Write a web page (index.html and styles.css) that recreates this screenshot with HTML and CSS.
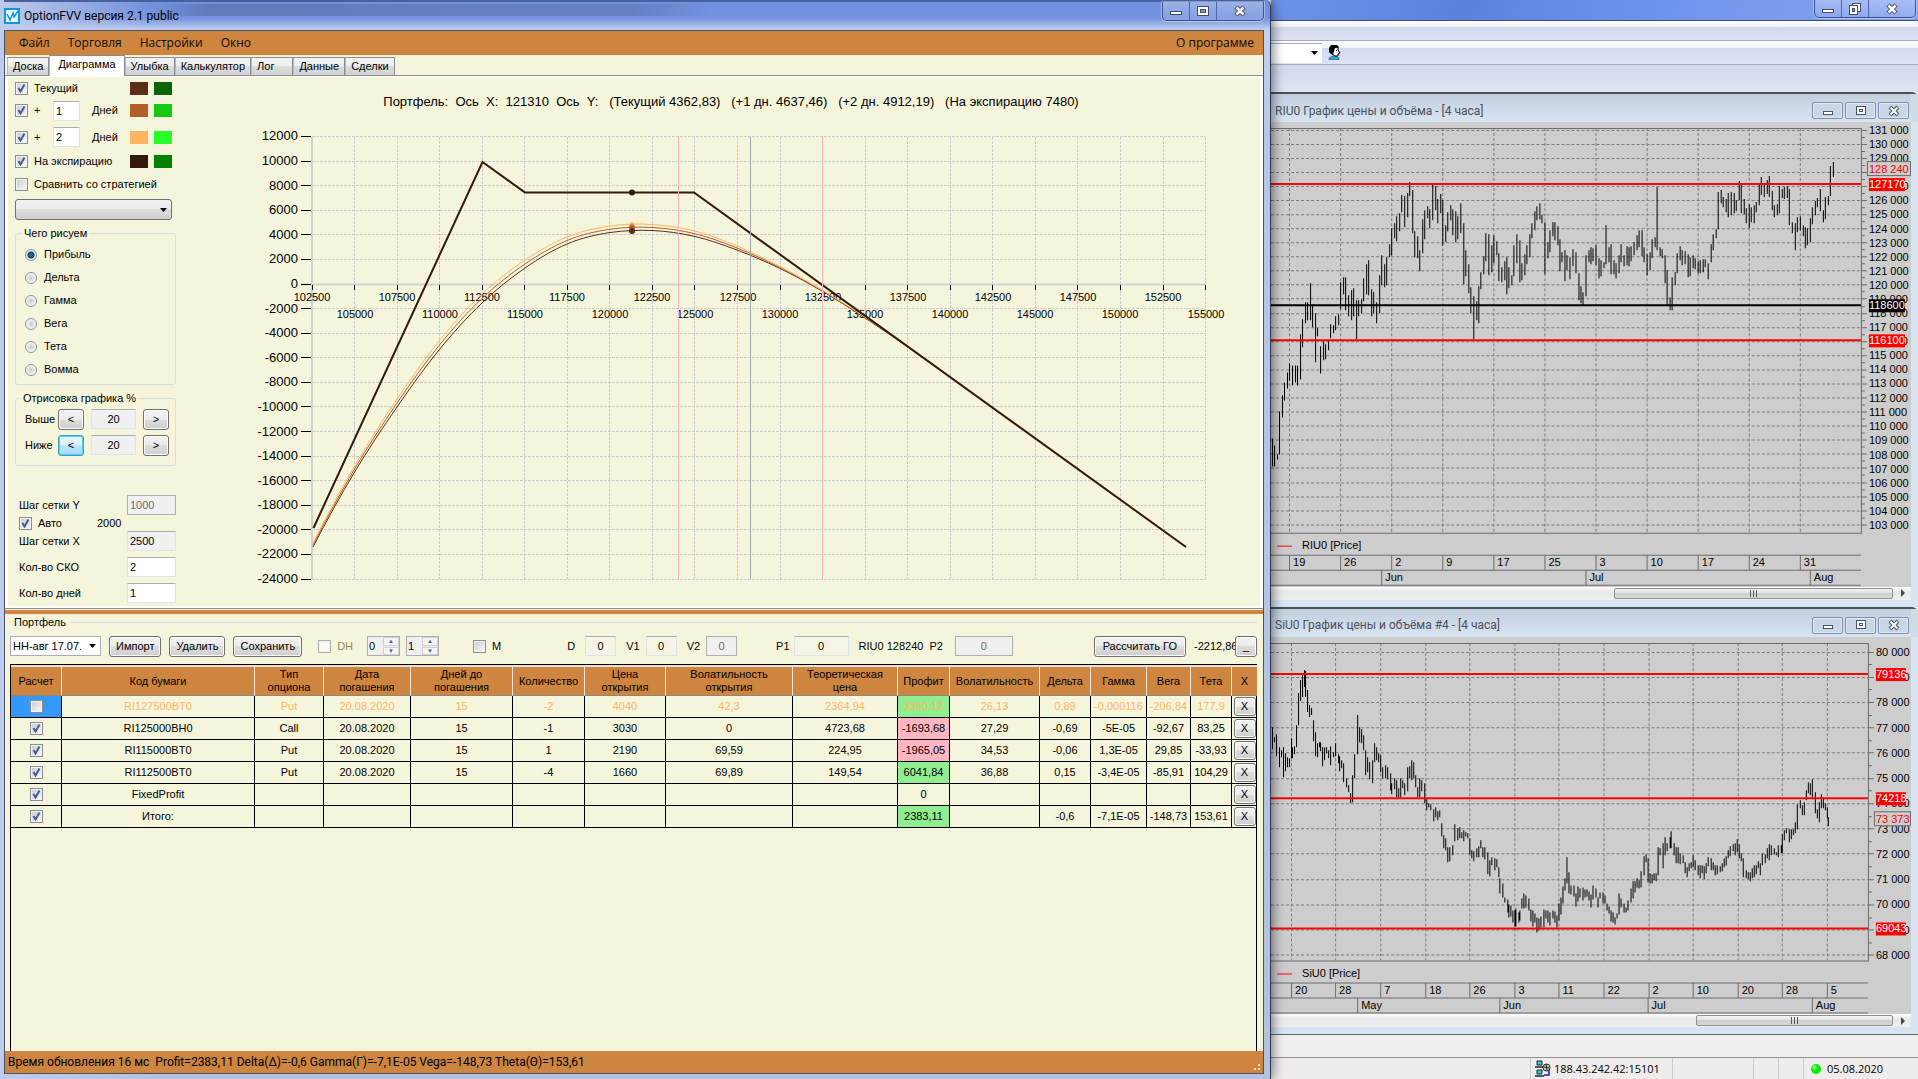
FILE: index.html
```html
<!DOCTYPE html>
<html lang="ru">
<head>
<meta charset="utf-8">
<title>OptionFVV версия 2.1 public</title>
<link rel="stylesheet" href="styles.css">
</head>
<body>
<div class="desktop">
  <section class="app">
    <header class="app-title">
      <svg class="logo" viewBox="0 0 16 16"><rect x="1" y="1" width="14" height="14" fill="#e8f8ff" stroke="#0a9ad8" stroke-width="2"/><path d="M3 6l3 6 3-7 1 4 4-6" fill="none" stroke="#0a9ad8" stroke-width="1.5"/></svg>
      <h1>OptionFVV версия 2.1 public</h1>
      <div class="caption">
        <button aria-label="Свернуть"><svg viewBox="0 0 14 12"><rect x="1.500" y="6.500" width="11" height="3" fill="#fff" stroke="#444c66"/></svg></button>
        <button aria-label="Развернуть"><svg viewBox="0 0 14 12"><rect x="1.500" y="1.500" width="11" height="9" fill="#fff" stroke="#444c66"/><rect x="4.500" y="4.500" width="5" height="3" fill="#7d9be0" stroke="#444c66"/></svg></button>
        <button class="wide" aria-label="Закрыть"><svg viewBox="0 0 14 12"><path d="M3 2l8 8M11 2l-8 8" stroke="#444c66" stroke-width="4.500"/><path d="M3.500 2.500l7 7M10.500 2.500l-7 7" stroke="#fff" stroke-width="2.500"/></svg></button>
      </div>
    </header>
    <div class="client">
      <nav class="menu">
        <a href="#file">Файл</a><a href="#trade">Торговля</a><a href="#settings">Настройки</a><a href="#window">Окно</a>
        <a class="about" href="#about">О программе</a>
      </nav>
      <div class="tabs" role="tablist">
        <button role="tab" class="tab">Доска</button>
        <button role="tab" class="tab active" aria-selected="true">Диаграмма</button>
        <button role="tab" class="tab">Улыбка</button>
        <button role="tab" class="tab">Калькулятор</button>
        <button role="tab" class="tab tab-log">Лог</button>
        <button role="tab" class="tab">Данные</button>
        <button role="tab" class="tab">Сделки</button>
      </div>
      <div class="page">
        <aside class="side">
          <div class="line h22"><label class="grow"><input type="checkbox" checked> Текущий</label><i class="sw c1"></i><i class="sw g1"></i></div>
          <div class="line h23"><label class="plus"><input type="checkbox" checked> +</label><input class="days" type="text" value="1" aria-label="Дней 1"><span class="grow">Дней</span><i class="sw c2"></i><i class="sw g2"></i></div>
          <div class="line h30"><label class="plus"><input type="checkbox" checked> +</label><input class="days" type="text" value="2" aria-label="Дней 2"><span class="grow">Дней</span><i class="sw c3"></i><i class="sw g3"></i></div>
          <div class="line h18"><label class="grow"><input type="checkbox" checked> На экспирацию</label><i class="sw c4"></i><i class="sw g4"></i></div>
          <div class="line h28"><label class="grow"><input type="checkbox"> Сравнить со стратегией</label></div>
          <select class="strategy" aria-label="Стратегия"><option></option></select>
          <fieldset class="what">
            <legend>Чего рисуем</legend>
            <label><input type="radio" name="what" checked> Прибыль</label>
            <label><input type="radio" name="what"> Дельта</label>
            <label><input type="radio" name="what"> Гамма</label>
            <label><input type="radio" name="what"> Вега</label>
            <label><input type="radio" name="what"> Тета</label>
            <label><input type="radio" name="what"> Вомма</label>
          </fieldset>
          <fieldset class="range">
            <legend>Отрисовка графика %</legend>
            <div><label for="above">Выше</label><button class="btn">&lt;</button><input id="above" type="text" value="20" readonly><button class="btn">&gt;</button></div>
            <div><label for="below">Ниже</label><button class="btn focus">&lt;</button><input id="below" type="text" value="20" readonly><button class="btn">&gt;</button></div>
          </fieldset>
          <div class="steps">
            <div><label for="sy">Шаг сетки Y</label><input id="sy" type="text" value="1000" disabled></div>
            <div class="auto"><label><input type="checkbox" checked> Авто</label><span>2000</span></div>
            <div><label for="sx">Шаг сетки X</label><input id="sx" type="text" value="2500" readonly></div>
            <div class="tall"><label for="sko">Кол-во СКО</label><input id="sko" type="text" value="2"></div>
            <div class="tall"><label for="kd">Кол-во дней</label><input id="kd" type="text" value="1"></div>
          </div>
        </aside>
        <svg class="payoff" id="payoff" viewBox="190 77 1070 529"></svg>
      </div>
      <div class="splitter"></div>
      <section class="portfolio">
        <h2>Портфель</h2>
        <div class="tools">
          <select class="pf" aria-label="Портфель"><option>НН-авг 17.07.</option></select>
          <button class="btn">Импорт</button>
          <button class="btn">Удалить</button>
          <button class="btn">Сохранить</button>
          <label class="dh"><input type="checkbox" disabled> DH</label>
          <span class="spin"><input type="text" value="0" aria-label="DH 1"><span><button aria-label="Больше">▲</button><button aria-label="Меньше">▼</button></span></span>
          <span class="spin"><input type="text" value="1" aria-label="DH 2"><span><button aria-label="Больше">▲</button><button aria-label="Меньше">▼</button></span></span>
          <label class="m"><input type="checkbox"> M</label>
          <label class="val d">D <input type="text" value="0" readonly></label>
          <label class="val">V1 <input type="text" value="0" readonly></label>
          <label class="val">V2 <input type="text" value="0" disabled></label>
          <label class="val p">P1 <input type="text" value="0" readonly></label>
          <span>RIU0 128240</span>
          <label class="val p2">P2 <input type="text" value="0" disabled></label>
          <button class="btn go">Рассчитать ГО</button>
          <output class="margin">-2212,86</output>
          <button class="btn mini" aria-label="Свернуть панель">_</button>
        </div>
        <div class="grid">
          <table>
            <colgroup><col class="w51"><col class="w193"><col class="w69"><col class="w87"><col class="w102"><col class="w72"><col class="w81"><col class="w127"><col class="w105"><col class="w52"><col class="w90"><col class="w51"><col class="w56"><col class="w44"><col class="w41"><col class="w25"></colgroup>
            <thead><tr><th>Расчет</th><th>Код бумаги</th><th>Тип опциона</th><th>Дата погашения</th><th>Дней до погашения</th><th>Количество</th><th>Цена открытия</th><th>Волатильность открытия</th><th>Теоретическая цена</th><th>Профит</th><th>Волатильность</th><th>Дельта</th><th>Гамма</th><th>Вега</th><th>Тета</th><th>X</th></tr></thead>
            <tbody>
              <tr class="off"><td class="sel"><input type="checkbox" aria-label="RI127500BT0"></td><td>RI127500BT0</td><td>Put</td><td>20.08.2020</td><td>15</td><td>-2</td><td>4040</td><td>42,3</td><td>2364,94</td><td class="up">3350,12</td><td>26,13</td><td>0,89</td><td>-0,000116</td><td>-206,84</td><td>177,9</td><td><button class="btn">X</button></td></tr>
              <tr><td><input type="checkbox" checked aria-label="RI125000BH0"></td><td>RI125000BH0</td><td>Call</td><td>20.08.2020</td><td>15</td><td>-1</td><td>3030</td><td>0</td><td>4723,68</td><td class="down">-1693,68</td><td>27,29</td><td>-0,69</td><td>-5E-05</td><td>-92,67</td><td>83,25</td><td><button class="btn">X</button></td></tr>
              <tr><td><input type="checkbox" checked aria-label="RI115000BT0"></td><td>RI115000BT0</td><td>Put</td><td>20.08.2020</td><td>15</td><td>1</td><td>2190</td><td>69,59</td><td>224,95</td><td class="down">-1965,05</td><td>34,53</td><td>-0,06</td><td>1,3E-05</td><td>29,85</td><td>-33,93</td><td><button class="btn">X</button></td></tr>
              <tr><td><input type="checkbox" checked aria-label="RI112500BT0"></td><td>RI112500BT0</td><td>Put</td><td>20.08.2020</td><td>15</td><td>-4</td><td>1660</td><td>69,89</td><td>149,54</td><td class="up">6041,84</td><td>36,88</td><td>0,15</td><td>-3,4E-05</td><td>-85,91</td><td>104,29</td><td><button class="btn">X</button></td></tr>
              <tr><td><input type="checkbox" checked aria-label="FixedProfit"></td><td>FixedProfit</td><td></td><td></td><td></td><td></td><td></td><td></td><td></td><td>0</td><td></td><td></td><td></td><td></td><td></td><td><button class="btn">X</button></td></tr>
              <tr><td><input type="checkbox" checked aria-label="Итого"></td><td>Итого:</td><td></td><td></td><td></td><td></td><td></td><td></td><td></td><td class="up">2383,11</td><td></td><td>-0,6</td><td>-7,1E-05</td><td>-148,73</td><td>153,61</td><td><button class="btn">X</button></td></tr>
            </tbody>
          </table>
        </div>
      </section>
      <footer class="status">Время обновления 16 мс&nbsp; Profit=2383,11 Delta(Δ)=-0,6 Gamma(Γ)=-7,1E-05 Vega=-148,73 Theta(Θ)=153,61<i class="grip"></i></footer>
    </div>
  </section>

  <section class="terminal">
    <div class="term-title">
      <div class="caption">
        <button aria-label="Свернуть"><svg viewBox="0 0 14 12"><rect x="1.500" y="6.500" width="11" height="3" fill="#fff" stroke="#444c66"/></svg></button>
        <button aria-label="Восстановить"><svg viewBox="0 0 14 12"><rect x="4.500" y=".500" width="8" height="8" fill="#fff" stroke="#444c66"/><rect x="1.500" y="2.500" width="8" height="9" fill="#fff" stroke="#444c66"/><rect x="4.500" y="5.500" width="2" height="3" fill="#7d9be0" stroke="#444c66"/></svg></button>
        <button class="wide" aria-label="Закрыть"><svg viewBox="0 0 14 12"><path d="M3 2l8 8M11 2l-8 8" stroke="#444c66" stroke-width="4.500"/><path d="M3.500 2.500l7 7M10.500 2.500l-7 7" stroke="#fff" stroke-width="2.500"/></svg></button>
      </div>
    </div>
    <div class="strip menu-strip"></div>
    <div class="strip tool-strip">
      <select class="tool-select" aria-label="Вкладка"><option></option></select>
      <svg class="person" viewBox="0 0 13 15"><path d="M1 15v-2l3-2h4l3 2v2z" fill="#2fa5c8" stroke="#10506a" stroke-width=".5"/><path d="M4 2h6v3l2 3-2 1v2H7l-3-2z" fill="#fff" stroke="#000"/><path d="M1 3l2-3h6l2 2-1 1H7L6 6 5 10 3 9 1 7z" fill="#000"/><path d="M8 5h1v1H8z" fill="#000"/></svg>
    </div>
    <div class="strip empty-strip"></div>

    <article class="mdi">
      <header><h2>RIU0 График цены и объёма - [4 часа]</h2>
        <button aria-label="Свернуть"><svg viewBox="0 0 14 12"><rect x="2.500" y="6.500" width="9" height="3" fill="#fff" stroke="#4a5468"/></svg></button>
        <button aria-label="Развернуть"><svg viewBox="0 0 14 12"><rect x="2.500" y="1.500" width="9" height="8" fill="#fff" stroke="#4a5468"/><rect x="5.500" y="4.500" width="3" height="2" fill="#fff" stroke="#4a5468"/></svg></button>
        <button aria-label="Закрыть"><svg viewBox="0 0 14 12"><path d="M3 2l8 8M11 2l-8 8" stroke="#4a5468" stroke-width="4"/><path d="M3.500 2.500l7 7M10.500 2.500l-7 7" stroke="#fff" stroke-width="2"/></svg></button>
      </header>
      <svg class="quotes" id="riu" viewBox="1272 122 639 464"></svg>
      <div class="scroll"><i class="thumb long"></i><i class="arrow"></i></div>
    </article>
    <article class="mdi">
      <header><h2>SiU0 График цены и объёма #4 - [4 часа]</h2>
        <button aria-label="Свернуть"><svg viewBox="0 0 14 12"><rect x="2.500" y="6.500" width="9" height="3" fill="#fff" stroke="#4a5468"/></svg></button>
        <button aria-label="Развернуть"><svg viewBox="0 0 14 12"><rect x="2.500" y="1.500" width="9" height="8" fill="#fff" stroke="#4a5468"/><rect x="5.500" y="4.500" width="3" height="2" fill="#fff" stroke="#4a5468"/></svg></button>
        <button aria-label="Закрыть"><svg viewBox="0 0 14 12"><path d="M3 2l8 8M11 2l-8 8" stroke="#4a5468" stroke-width="4"/><path d="M3.500 2.500l7 7M10.500 2.500l-7 7" stroke="#fff" stroke-width="2"/></svg></button>
      </header>
      <svg class="quotes" id="siu" viewBox="1272 637 639 377"></svg>
      <div class="scroll"><i class="thumb"></i><i class="arrow"></i></div>
    </article>
    <div class="gap"></div>
    <footer class="term-status">
      <span class="conn"><svg viewBox="0 0 16 17"><path d="M2 1h5v4H2zM2 10h5v4H2z" fill="#20d0e0" stroke="#222"/><path d="M0 7h9M0 16h9" stroke="#555" stroke-width="2"/><path d="M9 15h5V9" fill="none" stroke="#1020c0" stroke-width="1.500"/><circle cx="11.500" cy="7.500" r="3.500" fill="#ccc" stroke="#222"/><path d="M9 7l5 1M11 4l1 6" stroke="#222"/></svg>188.43.242.42:15101</span>
      <span class="s1"></span><span class="s2"></span><span class="s3"></span>
      <span class="date"><i></i>05.08.2020</span>
    </footer>
  </section>
</div>
<script src="charts.js"></script>
</body>
</html>
```
FILE: styles.css
```css
* { box-sizing: border-box; }
body { margin: 0; font: 11px/13px "Liberation Sans", Arial, sans-serif; color: #000; }
button, input, select { font: inherit; color: inherit; margin: 0; padding: 0; border-radius: 0; }
h1, h2 { margin: 0; font-weight: normal; }
svg { display: block; }
.desktop { display: grid; grid-template-columns: 1271fr 647fr; min-height: 100vh; background: #f0f0f0; overflow: hidden; }

/* OptionFVV window */
.app {
  display: flex; flex-direction: column; min-width: 0; position: relative; z-index: 1;
  padding: 0 6px 5px 4px; border-right: 1px solid #2c3850; border-radius: 0 6px 0 0;
  background: linear-gradient(90deg, rgba(190,203,236,1) 0, rgba(190,203,236,0) 12%), linear-gradient(#6f90dc 0, #7493de 18px, #c3d2f0 30px, #b7c6e2 140px, #b4c3dd 100%);
  box-shadow: 2px 0 12px rgba(0,0,0,.5);
}
.app-title {
  display: flex; align-items: center; height: 30px; gap: 4px; border-top: 2px solid #46619c;
  background: linear-gradient(90deg, transparent 12%, rgba(70,90,140,.4) 16%, rgba(70,90,140,.3) 50%, transparent 56%) 0 2px / 100% 12px no-repeat;
}
.logo { width: 16px; height: 16px; }
.app-title h1 { font: 12px/16px Roboto, "Noto Sans", sans-serif; flex: 1; }
.caption { display: flex; align-self: flex-start; height: 19px; border: 1px solid #3e538c; border-top: 0; border-radius: 0 0 5px 5px; overflow: hidden; box-shadow: 0 0 0 1px rgba(255,255,255,.35); }
.caption button { display: grid; place-items: center; width: 27px; border: 0; border-right: 1px solid #5068a8; background: linear-gradient(rgba(255,255,255,.3), rgba(255,255,255,.1)); }
.caption button.wide { width: 46px; border-right: 0; }
.caption svg { width: 14px; height: 12px; }
.client { flex: 1; display: flex; flex-direction: column; border: 1px solid #48506a; background: #f5f5dc; min-width: 0; }
.menu { display: flex; align-items: center; height: 24px; padding: 0 9px 0 14px; gap: 18px; background: #cd853f; font: 12px/16px "Open Sans", "Noto Sans", sans-serif; }
.menu a { color: #100a04; text-decoration: none; }
.menu .about { margin-left: auto; }
.tabs { display: flex; align-items: flex-end; height: 21px; padding-left: 2px; border-bottom: 1px solid #8c8e94; }
.tab { height: 18px; padding: 0 5px; border: 1px solid #898c95; border-left-color: #b8b8b8; border-bottom: 0; background: linear-gradient(#f4f4f4, #ededed 50%, #dcdcdc 50%, #d2d2d2); }
.tab.active { height: 21px; padding: 0 8px 3px; margin-bottom: -1px; background: #fff; }
.tab-log { padding-right: 18px; }
.page { display: flex; height: 532px; border: solid #fff; border-width: 1px 3px 2px 3px; box-shadow: 0 1px 0 #8c8e94; background: #f5f5dc; }
.side { width: 182px; flex: none; padding: 0 14px 0 7px; }
.payoff { flex: 1; min-width: 0; height: 100%; }

input[type=checkbox] { appearance: none; width: 13px; height: 13px; flex: none; border: 1px solid #8c8e94; background: linear-gradient(135deg, #c9cbd0, #fafafa); box-shadow: inset 0 0 0 1px #f2f2f2; }
input[type=checkbox]:checked { background: url("data:image/svg+xml,%3Csvg xmlns='http://www.w3.org/2000/svg' viewBox='0 0 11 11'%3E%3Cpath d='M2.500 5l2 3.500 4-7' fill='none' stroke='%23435a9c' stroke-width='2'/%3E%3C/svg%3E") center / 11px, linear-gradient(135deg, #c9cbd0, #fafafa); }
input[type=radio] { appearance: none; width: 12px; height: 12px; flex: none; border: 1px solid #8c8e94; border-radius: 50%; background: radial-gradient(circle, #c8c8c8 0, #eee 55%, #fff 70%); }
input[type=radio]:checked { background: radial-gradient(circle, #1c86b8 0, #123c5c 3px, #e8eef0 4px); }
input[type=text] { min-width: 0; border: 1px solid #e2e3ea; border-top-color: #abadb3; background: #fff; }
input[readonly], input:disabled { background: #f0f0f0; }
input:disabled { color: #6d6d6d; border-color: #afafaf; }
.btn { border: 1px solid #707070; border-radius: 3px; box-shadow: inset 0 0 0 1px #fcfcfc; background: linear-gradient(#f2f2f2, #ebebeb 50%, #dddddd 50%, #cfcfcf); }
.btn.focus { border-color: #3c9fc8; box-shadow: inset 0 0 0 1px #48d1f5; background: linear-gradient(#eaf6fd, #d9f0fc 50%, #bee6fd 50%, #a7d9f5); }

.line { display: flex; align-items: center; gap: 6px; padding-right: 4px; }
.line label { display: flex; align-items: center; gap: 6px; }
.h18 { height: 18px; } .h22 { height: 22px; } .h23 { height: 23px; } .h28 { height: 28px; } .h30 { height: 30px; }
.grow { flex: 1; }
.plus { width: 32px; }
.days { width: 27px; height: 20px; padding-left: 2px; margin-right: 6px; }
.sw { width: 18px; height: 13px; }
.c1 { background: #5c2c16; } .g1 { background: #0a640a; }
.c2 { background: #b45f28; } .g2 { background: #14c814; }
.c3 { background: #ffb464; } .g3 { background: #28ff28; }
.c4 { background: #321908; } .g4 { background: #008200; }
select { appearance: none; border: 1px solid #abadb3; background: #fff url("data:image/svg+xml,%3Csvg xmlns='http://www.w3.org/2000/svg' viewBox='0 0 7 4'%3E%3Cpath d='M0 0h7L3.500 4z'/%3E%3C/svg%3E") right 4px center / 7px 4px no-repeat; }
.strategy { display: block; width: 157px; height: 21px; margin-top: 1px; border-color: #707070; border-radius: 3px; background: url("data:image/svg+xml,%3Csvg xmlns='http://www.w3.org/2000/svg' viewBox='0 0 7 4'%3E%3Cpath d='M0 0h7L3.500 4z'/%3E%3C/svg%3E") right 4px center / 7px 4px no-repeat, linear-gradient(#f2f2f2, #ebebeb 50%, #dddddd 50%, #cfcfcf); }
fieldset { margin: 0; border: 1px solid #d5dfe5; border-radius: 3px; padding: 0 6px 0 9px; }
legend { padding: 0 2px; margin-left: -3px; }
.what { height: 158px; margin-top: 7px; }
.what label { display: flex; align-items: center; gap: 7px; height: 23px; }
.what legend + label { margin-top: 3px; }
.range { height: 74px; margin-top: 7px; }
.range legend { margin-left: -4px; }
.range div { display: flex; align-items: center; height: 26px; }
.range legend + div { margin-top: 1px; }
.range label { width: 33px; }
.range .btn { width: 26px; height: 21px; }
.range input { width: 45px; height: 20px; margin: 0 7px; text-align: center; }
.steps { margin-top: 29px; padding-left: 4px; }
.steps div { display: flex; align-items: center; justify-content: space-between; height: 20px; }
.steps input[type=text] { width: 49px; height: 20px; padding-left: 2px; }
.steps .auto { height: 16px; justify-content: flex-start; gap: 35px; }
.steps .auto label { display: flex; align-items: center; gap: 6px; }
.steps .tall { height: 20px; margin-top: 6px; }

.splitter { height: 4px; margin-top: 2px; background: #cd853f; flex: none; }
.portfolio { flex: 1; display: flex; flex-direction: column; padding: 0 6px 0 5px; }
.portfolio h2 { display: flex; align-items: center; gap: 3px; font-size: 11px; line-height: 13px; height: 17px; }
.portfolio h2::before, .portfolio h2::after { content: ""; height: 1px; width: 1px; background: #d5dfe5; }
.portfolio h2::after { flex: 1; }
.tools { display: flex; align-items: center; height: 30px; margin-bottom: 3px; gap: 8px; white-space: nowrap; }
.tools .btn { height: 21px; padding: 0 6px; }
.pf { width: 91px; height: 20px; padding-left: 2px; }
.tools label { display: flex; align-items: center; gap: 6px; }
.dh { margin-left: 8px; color: #8c8c58; }
.dh + .spin { margin-left: 6px; }
.dh input { background: #fafaf0; }
.spin { display: flex; width: 33px; height: 20px; border: 1px solid #abadb3; background: #f0f0f0; }
.spin + .spin { margin-left: -2px; }
.spin > input[type=text] { width: 15px; border: 0; padding-left: 1px; background: none; }
.spin > span { display: flex; flex-direction: column; width: 16px; gap: 1px; }
.spin button { flex: 1; border: 1px solid #d0d0d0; background: #f4f4f4; font-size: 6px; line-height: 6px; color: #4a5fa0; }
.m { margin-left: 26px; }
.val input { width: 31px; height: 20px; text-align: center; }
.val input[readonly] { background: #f5f5e6; }
.tools .d { margin-left: 58px; gap: 10px; }
.tools .val { margin-right: 2px; }
.tools .p { margin-left: 29px; gap: 4px; }
.p input { width: 55px; }
.tools .p2 { gap: 12px; margin-left: -2px; }
.p2 input { width: 58px; }
.tools .go { margin-left: auto; padding: 0 8px; }
.margin { width: 41px; overflow: hidden; }
.tools .mini { width: 22px; padding: 0; margin-left: -8px; }

.grid { flex: 1; border: 1px solid #000; border-bottom: 0; }
table { width: 100%; table-layout: fixed; border-collapse: separate; border-spacing: 0; text-align: center; }
.w25 { width: 25px; } .w41 { width: 41px; } .w44 { width: 44px; } .w51 { width: 51px; } .w52 { width: 52px; } .w56 { width: 56px; } .w69 { width: 69px; } .w72 { width: 72px; } .w81 { width: 81px; } .w87 { width: 87px; } .w90 { width: 90px; } .w102 { width: 102px; } .w105 { width: 105px; } .w127 { width: 127px; } .w193 { width: 193px; }
th { height: 31px; padding: 0 2px; font-weight: normal; background: #cd853f; border: solid; border-width: 2px 1px 1px 0; border-color: #e8e0d8 #f5e8d8 #908880 #000; }
td { height: 22px; padding: 0; border: solid #000; border-width: 0 1px 1px 0; white-space: nowrap; overflow: hidden; }
th:last-child, td:last-child { border-right: 0; }
td input { vertical-align: middle; }
td .btn { display: block; width: 22px; height: 19px; margin: auto; }
.off { color: #ffb464; }
.off .btn { color: #000; }
.sel { background: #3399ff; }
.up { background: #90ee90; }
.down { background: #ffb6c1; }
.status { position: relative; display: flex; align-items: center; height: 22px; padding-left: 3px; background: #cd853f; font: 12px/16px Roboto, "Noto Sans", sans-serif; }
.grip { position: absolute; right: 1px; bottom: 1px; width: 12px; height: 12px; background: radial-gradient(circle at 1px 1px, #f5e0c0 1px, transparent 1px) 0 0 / 4px 4px; clip-path: polygon(100% 0, 100% 100%, 0 100%); }

/* Trading terminal behind */
.terminal { display: flex; flex-direction: column; min-width: 0; }
.term-title { display: flex; justify-content: flex-end; height: 21px; padding-right: 2px; background: linear-gradient(100deg, #6c93e8, #5b83dd 30%, #6f94ee 60%, #86a4ee); border-bottom: 1px solid #3c4c70; }
.term-title .caption { height: 18px; }
.strip { border-bottom: 1px solid #a8acb8; background: linear-gradient(#fff 0, #eef0f8 30%, #d2d9ec 32%, #dfe4f4); }
.menu-strip { height: 20px; }
.tool-strip { display: flex; align-items: center; height: 24px; gap: 6px; }
.tool-select { width: 51px; height: 20px; border-width: 1px 0 0; }
.person { width: 13px; height: 15px; }
.empty-strip { height: 27px; background: linear-gradient(#d2d9ec, #dfe4f6); border-bottom: 0; }
.mdi { display: flex; flex-direction: column; padding: 0 7px 7px 0; background: #d7e4f2; border-top: 2px solid #4c5450; border-radius: 0 6px 0 0; }
.mdi header { display: flex; align-items: center; gap: 2px; height: 28px; padding: 5px 2px 0 4px; background: linear-gradient(#c3cfdd, #d7e4f2); box-shadow: 7px 0 0 #d0dbe9; }
.mdi h2 { flex: 1; font: 12px/16px Roboto, "Noto Sans", sans-serif; color: #4c5058; }
.mdi header button { display: grid; place-items: center; width: 31px; height: 17px; border: 1px solid #7f8fab; border-radius: 2px; background: #c9d6e6; box-shadow: inset 0 0 0 1px #dfe9f4; }
.mdi header svg { width: 14px; height: 12px; }
.quotes { width: 100%; background: #cdcdcd; }
.scroll { display: flex; justify-content: flex-end; align-items: center; height: 13px; gap: 8px; padding-right: 6px; background: linear-gradient(#fdfdfd, #e8e8e8 40%, #efefef); }
.thumb { width: 31%; height: 11px; border: 1px solid #8e8e8e; border-radius: 2px; background: repeating-linear-gradient(90deg, #555 0 1px, transparent 1px 3px) center / 8px 7px no-repeat, linear-gradient(#f2f2f2, #e2e2e2 50%, #cfcfcf 50%, #d8d8d8); }
.thumb.long { width: 44%; }
.arrow { border: 4px solid transparent; border-left-color: #444; border-right: 0; }
.gap { flex: 1; border-top: 1px solid #606468; border-bottom: 1px solid #909090; background: #f0f0f0; }
.term-status { display: flex; justify-content: flex-end; height: 21px; background: #f0eceb; font: 11px/21px "Open Sans", "Noto Sans", sans-serif; }
.term-status span { border-left: 1px solid #cfcbc8; }
.conn { display: flex; align-items: center; gap: 3px; width: 142px; padding-left: 4px; }
.conn svg { width: 16px; height: 17px; }
.s1 { width: 81px; } .s2 { width: 25px; } .s3 { width: 25px; }
.date { display: flex; align-items: center; gap: 6px; width: 115px; padding-left: 7px; }
.date i { width: 10px; height: 10px; border-radius: 50%; background: radial-gradient(circle at 35% 35%, #b0ffb0, #00f000 35%); }

/* chart parts */
.mesh { stroke: #cccccc; stroke-dasharray: 3 1; }
.zero { stroke: #d0d0d0; stroke-width: 2; }
.tick { stroke: #000; }
.ylab { font-size: 13px; text-anchor: end; }
.xlab { font-size: 11px; text-anchor: middle; }
.head { font-size: 13px; text-anchor: middle; white-space: pre; }
.curve { fill: none; stroke-width: 1; }
.expiry { fill: none; stroke: #321908; stroke-width: 2; }
.sigma { stroke: #ffb6c1; }
.spot { stroke: #a0a8a8; stroke-width: 1; }
.dash { stroke: #7c7c7c; stroke-dasharray: 3 2; }
.frame { stroke: #6c6c6c; fill: none; }
.bars { stroke: #000; fill: none; }
.price { font-size: 11px; }
.dates { font-size: 11px; }
.level { stroke-width: 2; }
.badge-text { fill: #fff; }
.last { fill: #f00; }
.last-box { fill: #cdcdcd; stroke: #6c6c6c; }
```
FILE: charts.js
```javascript
const NS = 'http://www.w3.org/2000/svg';
function add(parent, tag, attrs, text) {
  const el = document.createElementNS(NS, tag);
  for (const k in attrs) el.setAttribute(k, attrs[k]);
  if (text !== undefined) el.textContent = text;
  parent.appendChild(el);
  return el;
}
const path = (svg, cls, d, extra) => add(svg, 'path', Object.assign({ class: cls, d }, extra));
const snap = v => Math.round(v) + 0.5;

// Payoff diagram
(function () {
  const svg = document.getElementById('payoff');
  const X = p => 312 + (p - 102500) / 2500 * 42.55;
  const Y = v => 284 - v / 2000 * 24.59;
  let mesh = '', ticks = '';
  for (let v = 12000; v >= -24000; v -= 2000) {
    const y = snap(Y(v) - 0.5);
    mesh += `M312 ${y}H1205`;
    ticks += `M301 ${y}h10`;
  }
  for (let p = 102500; p <= 155000; p += 2500) mesh += `M${snap(X(p) - 0.5)} 137V579`;
  path(svg, 'mesh', mesh);
  path(svg, 'zero', 'M301 284.5H1206M312 137V579');
  for (let p = 102500; p <= 155000; p += 2500) ticks += `M${snap(X(p) - 0.5)} 285v5`;
  path(svg, 'tick', ticks);
  for (let v = 12000; v >= -24000; v -= 2000) add(svg, 'text', { class: 'ylab', x: 298, y: Math.round(Y(v)) + 4 }, v);
  for (let p = 102500, i = 0; p <= 155000; p += 2500, i++) add(svg, 'text', { class: 'xlab', x: Math.round(X(p)), y: i % 2 ? 318 : 301 }, p);
  add(svg, 'text', { class: 'head', x: 731, y: 106 }, 'Портфель:  Ось  X:  121310  Ось  Y:   (Текущий 4362,83)   (+1 дн. 4637,46)   (+2 дн. 4912,19)   (На экспирацию 7480)');

  const xs = [313, 354, 397, 439, 482, 525, 567, 610, 633, 652, 695, 737, 779, 822, 865, 908, 950];
  const now = [547, 473, 407, 350, 303, 268, 244, 232.500, 230.500, 230.500, 236.500, 250, 268, 291, 318, 347, 377];
  const far = [543, 467, 399, 341, 294, 260, 237, 226, 224, 224.500, 231, 246, 266, 290, 317, 346.500, 377];
  const mid = now.map((v, i) => (v + far[i]) / 2);
  function smooth(ys) {
    const n = xs.length, h = [], s = [];
    for (let i = 0; i < n - 1; i++) { h[i] = xs[i + 1] - xs[i]; s[i] = (ys[i + 1] - ys[i]) / h[i]; }
    const m = xs.map((x, i) => i === 0 ? s[0] * 1.5 - s[1] * 0.5 : i === n - 1 ? s[n - 2] : (s[i - 1] * h[i] + s[i] * h[i - 1]) / (h[i - 1] + h[i]));
    let d = `M${xs[0]} ${ys[0]}`;
    for (let i = 0; i < n - 1; i++) d += `C${xs[i] + h[i] / 3} ${ys[i] + m[i] * h[i] / 3} ${xs[i + 1] - h[i] / 3} ${ys[i + 1] - m[i + 1] * h[i] / 3} ${xs[i + 1]} ${ys[i + 1]}`;
    return d;
  }
  path(svg, 'curve', smooth(now), { stroke: '#5c2c16' });
  path(svg, 'curve', smooth(mid), { stroke: '#b45f28' });
  path(svg, 'curve', smooth(far), { stroke: '#ffb464' });
  path(svg, 'expiry', 'M313.5 528L482.5 162L525 192.5H694L1186 547');
  path(svg, 'sigma', 'M678.5 137V579M822.5 137V579');
  path(svg, 'spot', 'M750.5 137V579');
  [[192.5, '#321908', 3], [224, '#ffb464', 2], [227.5, '#b45f28', 3], [231, '#5c2c16', 3]]
    .forEach(([cy, fill, r]) => add(svg, 'circle', { cx: 632, cy, r, fill }));
})();

// Four-hour bars: x, high, low on the recording sheet
const RIU = '8,1314,1397 13,1335,1397 20,1362,1376 26,1233,1363 32,1185,1250 38,1146,1200 45,1115,1164 50,1088,1140 57,1095,1155 64,1095,1147 69,1095,1155 76,1002,1137 81,958,1040 88,906,969 94,905,960 100,849,960 105,912,982 112,938,1085 118,985,1008 124,1038,1118 131,1023,1080 137,1032,1078 144,1022,1050 149,972,1013 156,975,998 161,948,990 168,942,975 173,846,927 180,831,882 185,831,930 192,885,948 199,870,960 205,864,948 212,900,1017 217,900,948 223,896,938 229,834,903 236,792,882 241,780,885 248,867,948 254,875,938 260,905,970 267,825,938 273,765,855 279,793,860 285,770,855 291,732,772 297,684,765 303,670,713 309,648,723 316,640,693 321,585,636 328,588,682 334,580,650 340,546,588 347,570,700 352,693,771 359,708,775 364,750,812 371,657,758 376,630,717 383,617,655 389,627,683 396,552,660 402,558,630 408,597,670 415,582,638 420,600,735 427,675,725 433,636,693 439,615,660 445,628,705 451,633,725 457,648,718 463,608,700 470,668,852 476,750,828 483,793,878 488,860,938 495,888,1017 501,903,960 506,858,970 512,815,868 519,768,822 525,699,783 531,702,825 538,735,817 544,705,788 550,722,765 556,760,843 562,800,846 569,783,840 574,770,881 580,800,864 587,825,855 592,735,828 599,702,790 606,720,845 612,788,840 618,762,825 624,735,792 630,702,770 636,668,713 642,633,690 648,618,660 654,609,657 660,645,670 666,666,822 673,725,773 679,690,755 685,666,708 691,666,720 697,678,735 703,717,813 709,755,787 715,750,843 721,765,810 728,770,838 735,747,797 741,755,820 748,818,900 754,858,909 759,875,914 766,765,888 772,750,787 779,741,793 784,745,782 790,735,795 797,775,833 803,780,828 809,787,805 815,675,792 821,740,787 827,733,822 833,780,822 839,788,833 845,765,820 851,732,785 857,765,798 864,738,795 870,742,797 876,738,783 882,725,765 889,705,750 894,690,742 901,690,768 907,740,787 914,762,825 920,755,810 926,717,775 933,711,742 938,561,750 945,740,768 951,747,775 957,765,850 963,810,915 969,890,930 975,831,930 981,815,855 987,758,820 993,738,780 999,750,795 1006,753,792 1012,762,830 1018,770,828 1024,765,805 1030,775,808 1037,783,820 1042,780,818 1049,778,815 1055,778,800 1061,790,837 1068,732,785 1073,702,750 1080,687,713 1085,576,688 1092,570,610 1098,592,622 1104,597,635 1110,580,650 1117,575,645 1123,580,638 1129,600,633 1136,543,600 1142,555,638 1148,597,642 1154,625,670 1160,612,684 1166,620,665 1172,615,670 1178,605,635 1184,555,615 1190,531,586 1197,552,590 1203,540,583 1209,528,592 1215,572,630 1221,615,650 1227,612,645 1233,558,638 1240,567,595 1246,562,596 1252,558,595 1258,567,675 1264,665,700 1271,670,750 1277,650,695 1283,648,690 1290,675,708 1296,682,743 1301,683,735 1307,655,725 1314,620,673 1320,603,645 1326,595,622 1332,567,632 1339,630,665 1345,590,657 1351,588,615 1356,498,588 1363,486,530';
const SIU = '8,381,446 13,410,426 18,402,467 25,441,500 31,450,470 35,441,530 40,460,513 45,470,500 50,475,500 54,414,475 57,440,475 61,438,461 66,375,440 72,279,375 77,240,303 81,222,290 87,210,261 89,212,290 93,270,335 98,315,350 103,325,345 108,360,423 113,396,468 118,430,472 121,425,440 125,425,452 130,440,497 135,440,480 139,440,460 144,450,475 150,438,494 155,455,472 161,429,467 167,461,490 171,468,512 176,480,505 181,490,545 187,533,560 193,555,575 198,580,609 202,525,605 208,461,533 214,345,461 219,381,425 223,387,430 229,405,450 234,450,525 239,472,515 244,485,538 250,480,548 255,429,487 260,440,480 265,460,485 270,465,515 275,502,535 281,495,533 287,502,538 293,520,570 297,550,582 303,535,568 308,540,590 313,563,592 318,535,590 324,540,563 329,550,585 334,500,572 339,498,535 345,480,540 350,485,533 355,525,562 360,560,590 364,535,590 370,540,572 376,550,610 381,595,630 386,610,620 392,612,630 397,628,662 402,622,650 408,632,660 413,630,650 418,670,708 423,705,745 428,715,750 433,740,785 438,742,782 444,735,765 449,672,723 455,685,720 460,682,715 465,697,715 470,690,722 476,697,708 481,700,715 485,715,762 490,750,775 496,752,782 501,745,770 507,738,770 512,720,745 517,740,770 522,742,777 528,755,822 533,780,828 539,770,795 545,775,810 550,778,800 555,800,830 559,835,880 564,850,890 571,890,905 576,898,935 580,912,950 585,915,948 590,930,965 593,930,978 597,925,978 603,935,965 607,930,960 611,893,925 616,878,925 621,885,920 627,895,930 632,928,963 638,930,978 643,940,965 648,950,995 653,955,990 658,948,982 664,928,980 669,930,955 674,930,965 680,935,975 686,930,955 691,933,965 696,945,980 700,910,960 706,890,943 711,857,908 716,835,870 720,772,850 725,815,880 730,855,882 736,855,888 741,880,917 747,858,902 752,865,890 758,860,900 763,866,890 768,868,888 773,872,900 778,882,920 784,855,898 789,865,892 795,890,922 800,875,895 806,875,910 811,885,910 816,908,930 822,918,940 827,930,963 831,935,965 835,950,972 841,940,955 846,880,942 851,895,920 857,910,935 862,922,935 868,900,930 874,865,905 879,843,895 885,843,875 889,835,862 894,840,865 900,812,862 906,768,825 911,762,785 916,775,845 920,820,848 925,822,850 931,820,840 936,820,842 940,740,825 946,745,765 952,730,805 958,712,765 963,730,753 968,712,745 972,693,745 978,730,765 983,742,790 988,742,790 994,760,792 1000,765,790 1005,785,820 1010,800,830 1015,790,812 1021,785,805 1025,765,800 1030,780,810 1036,795,825 1041,795,835 1047,795,820 1052,798,838 1057,790,820 1062,770,798 1068,773,810 1073,785,810 1078,795,825 1083,795,822 1089,797,815 1095,790,812 1100,775,800 1105,768,795 1110,750,775 1115,738,768 1121,732,752 1126,728,765 1131,717,755 1136,733,775 1142,760,782 1146,775,830 1152,810,835 1157,815,838 1162,815,842 1167,805,835 1173,795,830 1178,795,822 1183,783,805 1188,790,825 1193,758,795 1199,762,790 1204,745,775 1209,732,780 1214,735,765 1220,743,762 1226,755,765 1231,735,772 1237,735,760 1241,702,760 1246,690,720 1251,683,700 1257,687,725 1262,687,718 1268,687,705 1272,665,700 1277,612,687 1283,600,625 1289,615,645 1294,605,645 1299,570,600 1304,545,580 1308,550,585 1313,537,590 1319,575,638 1325,628,655 1330,605,665 1335,582,625 1340,590,625 1345,608,630 1349,620,655 1352,650,678';

function quotes(o) {
  const svg = document.getElementById(o.id);
  const Y = p => o.y0 + (o.hi - p) / 1000 * o.step;
  let mesh = '', ticks = '';
  for (let p = o.hi; p >= o.lo; p -= 1000) {
    const y = snap(Y(p) - 0.5);
    mesh += `M1272 ${y}H${o.right}`;
    ticks += `M${o.right} ${y}h6`;
    if (p > o.lo) ticks += `M${o.right} ${snap(Y(p - 500) - 0.5)}h4`;
  }
  o.days.forEach((d, i) => { mesh += `M${snap(o.x0 + i * o.dx - 0.5)} ${o.top}V${o.bottom}`; });
  path(svg, 'dash', mesh);
  path(svg, 'frame', `M1272 ${o.top}.5H${o.right}.5V${o.bottom}.5H1272` + ticks);
  let bars = '';
  o.bars.split(' ').forEach(b => {
    const [x, h, l] = b.split(',').map(Number);
    bars += `M${snap(1270 + x / 2.42 - 0.5)} ${Math.round(o.off + h / 3)}V${Math.round(o.off + l / 3)}`;
  });
  path(svg, 'bars', bars);
  const fmt = p => String(Math.floor(p / 1000)) + ' ' + String(p % 1000).padStart(3, '0');
  for (let p = o.hi; p >= o.lo; p -= 1000) add(svg, 'text', { class: 'price', x: o.right + 8, y: Math.round(Y(p)) + 4 }, fmt(p));
  add(svg, 'rect', { class: 'last-box', x: o.right + 6.5, y: o.lastY - 7.5, width: 1911 - o.right - 7, height: 14 });
  add(svg, 'text', { class: 'price last', x: o.right + 8, y: o.lastY + 4 }, fmt(o.last));
  o.levels.forEach(([v, y, c]) => {
    path(svg, 'level', `M1272 ${y}H${o.right}`, { stroke: c });
    add(svg, 'rect', { x: o.right + 8, y: y - 6, width: o.badge, height: 13, fill: c });
    add(svg, 'text', { class: 'price badge-text', x: o.right + 8, y: y + 4 }, v);
  });
  const t = o.dateTop;
  let cal = `M1272 ${t}.5H${o.right}M1272 ${t + 15}.5H${o.right}M1272 ${t + 30}.5H${o.right}`;
  o.days.forEach((d, i) => {
    const x = snap(o.x0 + i * o.dx - 0.5);
    cal += `M${x} ${t}v15`;
    add(svg, 'text', { class: 'dates', x: x + 3.5, y: t + 11 }, d);
  });
  o.months.forEach(([x, m]) => {
    cal += `M${x}.5 ${t + 15}v15`;
    add(svg, 'text', { class: 'dates', x: x + 4, y: t + 26 }, m);
  });
  path(svg, 'frame', cal);
  path(svg, 'key', `M1278 ${t - 9}.5h15`, { stroke: '#f00' });
  add(svg, 'text', { class: 'dates', x: 1303, y: t - 6 }, o.name);
}
quotes({ id: 'riu', name: 'RIU0 [Price]', bars: RIU, off: 0, hi: 131000, lo: 103000, y0: 130, step: 14.08, x0: 1290.6, dx: 51,
  right: 1861, top: 128, bottom: 532, dateTop: 554, lastY: 169, last: 128240, badge: 36,
  days: [19, 26, 2, 9, 17, 25, 3, 10, 17, 24, 31], months: [[1382, 'Jun'], [1586, 'Jul'], [1810, 'Aug']],
  levels: [['127170', 184, '#f00'], ['118600', 305, '#000'], ['116100', 340, '#f00']] });
quotes({ id: 'siu', name: 'SiU0 [Price]', bars: SIU, off: 600, hi: 80000, lo: 68000, y0: 652, step: 25.24, x0: 1292.3, dx: 44.6,
  right: 1868, top: 643, bottom: 960, dateTop: 982, lastY: 819, last: 73373, badge: 30,
  days: [20, 28, 7, 18, 26, 3, 11, 22, 2, 10, 20, 28, 5], months: [[1358, 'May'], [1500, 'Jun'], [1648, 'Jul'], [1812, 'Aug']],
  levels: [['79136', 674, '#f00'], ['74218', 798, '#f00'], ['69043', 928, '#f00']] });
```
